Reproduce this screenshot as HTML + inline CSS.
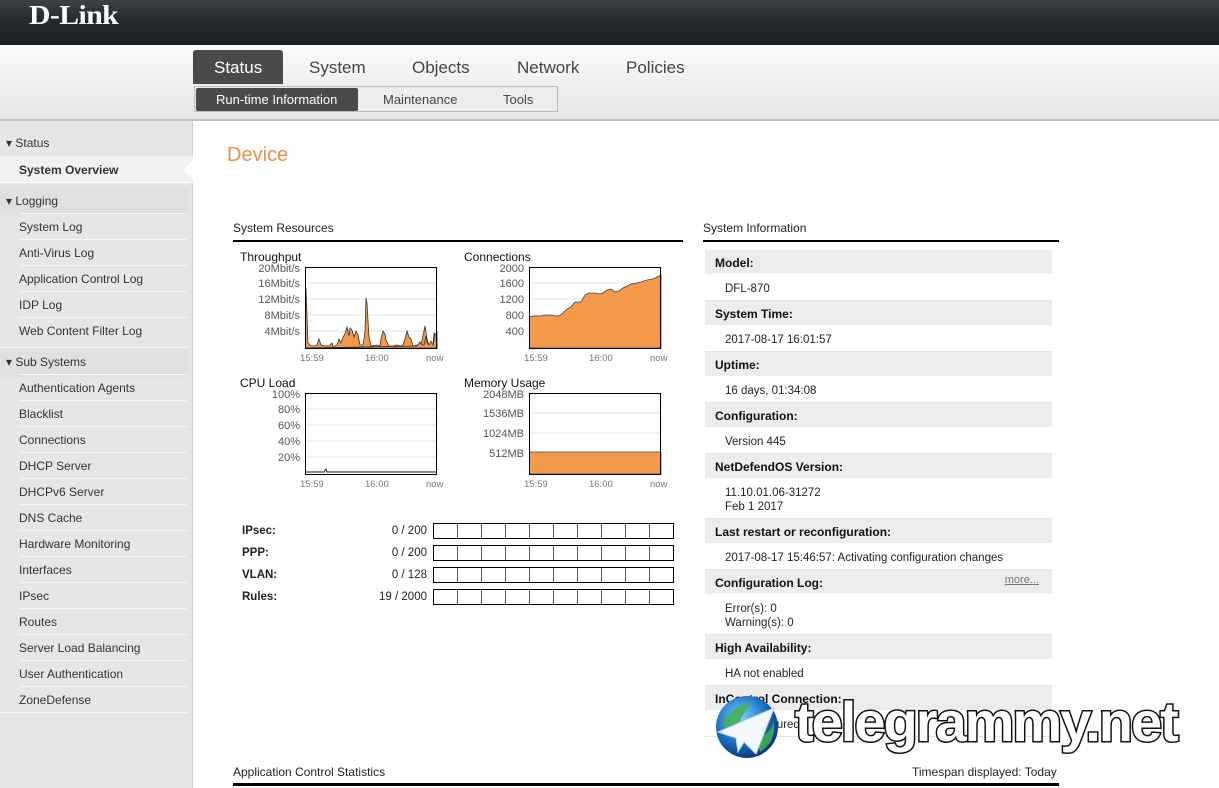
<!DOCTYPE html>
<html><head><meta charset="utf-8"><style>
*{margin:0;padding:0;box-sizing:border-box}
body{width:1219px;height:788px;overflow:hidden;background:#fff;font-family:"Liberation Sans",Arial,sans-serif;position:relative;color:#222}
.a{position:absolute}
#hdr{left:0;top:0;width:1219px;height:45px;background:linear-gradient(#3d4045,#24272b 50%,#1e2125)}
#nav{left:0;top:45px;width:1219px;height:76px;background:linear-gradient(#fafafa,#e6e6e6);border-bottom:2px solid #c4c4c4}
.tab{font-size:17px;color:#444;top:58px}
#side{left:0;top:121px;width:193px;height:667px;background:#e6e6e6;border-right:1px solid #cfcfcf}
.si{position:absolute;left:19px;font-size:12px;color:#333;line-height:28px;width:168px}
.sl{position:absolute;left:19px;width:168px;height:1px;background:#f6f6f6}
.sh{position:absolute;left:0;width:188px;font-size:12px;color:#333;line-height:28px;padding-left:6px}
.lbl{font-size:11px;color:#555;position:absolute;text-align:right;width:60px}
.ttl{font-size:12px;color:#111;position:absolute}
.ax{font-size:9.5px;color:#777;position:absolute}
.rh{position:absolute;left:705px;width:347px;height:25px;background:#ececec;border-bottom:1px solid #fff;font-size:12px;font-weight:bold;padding-left:10px;line-height:26px;color:#111}
.rv{position:absolute;left:705px;width:347px;border-bottom:1px solid #e4e4e4;font-size:11.5px;padding-left:20px;line-height:14px;color:#222}
.bar{position:absolute;left:433px;width:241px;height:16px;border:1px solid #000;background:repeating-linear-gradient(90deg,#fff 0 23px,#555 23px 24px)}
.rl{position:absolute;left:242px;font-size:11.5px;font-weight:bold}
.rn{position:absolute;left:340px;width:87px;text-align:right;font-size:11.5px}
</style></head><body>
<div id="hdr" class="a"></div>
<div class="a" style="left:29px;top:0px;font:900 27px 'Liberation Serif',serif;color:#fff;letter-spacing:-0.5px;transform:scaleX(1.1);transform-origin:left">D-Link</div>
<div id="nav" class="a"></div>
<div class="a" style="left:193px;top:50px;width:90px;height:34px;background:#4a4a4a;border-radius:3px 3px 0 0"></div>
<div class="a tab" style="left:214px;color:#fff">Status</div>
<div class="a tab" style="left:309px">System</div>
<div class="a tab" style="left:412px">Objects</div>
<div class="a tab" style="left:517px">Network</div>
<div class="a tab" style="left:626px">Policies</div>
<div class="a" style="left:194px;top:86px;width:364px;height:26px;border:1px solid #bbb;background:#ededed"></div>
<div class="a" style="left:196px;top:88px;width:162px;height:23px;background:#4a4a4a;border-radius:2px"></div>
<div class="a" style="left:216px;top:92px;font-size:13px;color:#fff">Run-time Information</div>
<div class="a" style="left:383px;top:92px;font-size:13px;color:#444">Maintenance</div>
<div class="a" style="left:503px;top:92px;font-size:13px;color:#444">Tools</div>

<div id="side" class="a"></div>
<div class="sh" style="top:129px">▾ Status</div>
<div class="a" style="left:0;top:156px;width:193px;height:27px;background:#f1f1f1;border-bottom:1px solid #fff"></div>
<div class="si" style="top:156px;font-weight:bold">System Overview</div>
<div class="a" style="left:183px;top:160px;width:0;height:0;border-top:10px solid transparent;border-bottom:10px solid transparent;border-right:11px solid #fff"></div>
<div class="sh" style="top:187px;background:#e0e0e0">▾ Logging</div>
<div class="sl" style="top:213px"></div>
<div class="si" style="top:213px">System Log</div><div class="sl" style="top:239px"></div>
<div class="si" style="top:239px">Anti-Virus Log</div><div class="sl" style="top:265px"></div>
<div class="si" style="top:265px">Application Control Log</div><div class="sl" style="top:291px"></div>
<div class="si" style="top:291px">IDP Log</div><div class="sl" style="top:317px"></div>
<div class="si" style="top:317px">Web Content Filter Log</div>
<div class="sh" style="top:347px;background:#e0e0e0;border-top:1px solid #f6f6f6;line-height:29px">▾ Sub Systems</div>
<div class="sl" style="top:374px"></div>
<div class="si" style="top:374px">Authentication Agents</div><div class="sl" style="top:400px"></div>
<div class="si" style="top:400px">Blacklist</div><div class="sl" style="top:426px"></div>
<div class="si" style="top:426px">Connections</div><div class="sl" style="top:452px"></div>
<div class="si" style="top:452px">DHCP Server</div><div class="sl" style="top:478px"></div>
<div class="si" style="top:478px">DHCPv6 Server</div><div class="sl" style="top:504px"></div>
<div class="si" style="top:504px">DNS Cache</div><div class="sl" style="top:530px"></div>
<div class="si" style="top:530px">Hardware Monitoring</div><div class="sl" style="top:556px"></div>
<div class="si" style="top:556px">Interfaces</div><div class="sl" style="top:582px"></div>
<div class="si" style="top:582px">IPsec</div><div class="sl" style="top:608px"></div>
<div class="si" style="top:608px">Routes</div><div class="sl" style="top:634px"></div>
<div class="si" style="top:634px">Server Load Balancing</div><div class="sl" style="top:660px"></div>
<div class="si" style="top:660px">User Authentication</div><div class="sl" style="top:686px"></div>
<div class="si" style="top:686px">ZoneDefense</div>
<div class="a" style="left:0;top:712px;width:188px;height:1px;background:#f6f6f6"></div>

<div class="a" style="left:227px;top:144px;font-size:20px;color:#e8904a">Device</div>

<div class="a" style="left:233px;top:221px;font-size:12px">System Resources</div>
<div class="a" style="left:233px;top:240px;width:450px;height:2px;background:#000"></div>
<div class="a" style="left:703px;top:221px;font-size:12px">System Information</div>
<div class="a" style="left:703px;top:240px;width:356px;height:2px;background:#000"></div>

<div class="ttl" style="left:240px;top:250px">Throughput</div>
<div class="ttl" style="left:464px;top:250px">Connections</div>
<div class="ttl" style="left:240px;top:376px">CPU Load</div>
<div class="ttl" style="left:464px;top:376px">Memory Usage</div>

<div class="lbl" style="left:240px;top:263px">20Mbit/s</div>
<div class="lbl" style="left:240px;top:278px">16Mbit/s</div>
<div class="lbl" style="left:240px;top:294px">12Mbit/s</div>
<div class="lbl" style="left:240px;top:310px">8Mbit/s</div>
<div class="lbl" style="left:240px;top:326px">4Mbit/s</div>
<div class="lbl" style="left:464px;top:263px">2000</div>
<div class="lbl" style="left:464px;top:278px">1600</div>
<div class="lbl" style="left:464px;top:294px">1200</div>
<div class="lbl" style="left:464px;top:310px">800</div>
<div class="lbl" style="left:464px;top:326px">400</div>
<div class="lbl" style="left:240px;top:389px">100%</div>
<div class="lbl" style="left:240px;top:404px">80%</div>
<div class="lbl" style="left:240px;top:420px">60%</div>
<div class="lbl" style="left:240px;top:436px">40%</div>
<div class="lbl" style="left:240px;top:452px">20%</div>
<div class="lbl" style="left:464px;top:389px">2048MB</div>
<div class="lbl" style="left:464px;top:408px">1536MB</div>
<div class="lbl" style="left:464px;top:428px">1024MB</div>
<div class="lbl" style="left:464px;top:448px">512MB</div>

<div class="ax" style="left:300px;top:353px">15:59</div><div class="ax" style="left:365px;top:353px">16:00</div><div class="ax" style="left:426px;top:353px">now</div>
<div class="ax" style="left:524px;top:353px">15:59</div><div class="ax" style="left:589px;top:353px">16:00</div><div class="ax" style="left:650px;top:353px">now</div>
<div class="ax" style="left:300px;top:479px">15:59</div><div class="ax" style="left:365px;top:479px">16:00</div><div class="ax" style="left:426px;top:479px">now</div>
<div class="ax" style="left:524px;top:479px">15:59</div><div class="ax" style="left:589px;top:479px">16:00</div><div class="ax" style="left:650px;top:479px">now</div>

<svg class="a" style="left:305px;top:267px" width="133" height="82">
<g stroke="#e4e4e4"><line x1="0" y1="16" x2="132" y2="16"/><line x1="0" y1="32" x2="132" y2="32"/><line x1="0" y1="48" x2="132" y2="48"/><line x1="0" y1="64" x2="132" y2="64"/></g>
<polygon fill="#f4994a" stroke="#333" stroke-width="0.8" points="0,81 0,20 1,22 3,76 6,79 10,79 12,78 14,72 16,78 20,79 24,79 27,76 28,80 32,78 34,72 36,76 38,70 40,67 42,60 43,64 44,69 45,61 47,63 49,70 51,64 53,68 55,78 58,78 60,65 61,31 62,37 64,70 66,79 72,78 75,79 76,72 78,64 80,67 81,73 84,79 88,79 92,78 96,79 98,78 100,72 102,64 103,67 104,70 106,72 108,79 112,78 116,78 118,69 120,59 121,65 122,72 124,79 128,79 129,66 131,69 132,80 132,81"/>
<polygon fill="#f4994a" stroke="#333" stroke-width="0.8" points="0,81 132,81 132,64 130,69 128,78 126,74 124,78 122,76 121,69 119,78 117,78 115,75 113,78 112,79"/>
<rect x="0.5" y="0.5" width="131" height="81" fill="none" stroke="#000"/></svg>

<svg class="a" style="left:529px;top:267px" width="133" height="82">
<g stroke="#e4e4e4"><line x1="0" y1="16" x2="132" y2="16"/><line x1="0" y1="32" x2="132" y2="32"/><line x1="0" y1="48" x2="132" y2="48"/><line x1="0" y1="64" x2="132" y2="64"/></g>
<polygon fill="#f4994a" stroke="#444" stroke-width="0.8" points="0,81 0,50 4,49 12,49 16,48 22,48 27,49 30,49 34,46 38,42 42,40 46,35 52,35 56,28 60,26 66,26 70,27 74,26 78,23 82,22 86,25 90,24 94,21 98,19 102,17 108,16 112,15 118,13 124,12 128,10 132,8 132,81"/>
<rect x="0.5" y="0.5" width="131" height="81" fill="none" stroke="#000"/></svg>

<svg class="a" style="left:305px;top:393px" width="133" height="82">
<g stroke="#e4e4e4"><line x1="0" y1="16" x2="132" y2="16"/><line x1="0" y1="32" x2="132" y2="32"/><line x1="0" y1="48" x2="132" y2="48"/><line x1="0" y1="64" x2="132" y2="64"/></g>
<polyline fill="none" stroke="#444" stroke-width="1.2" points="0,79 19,79 21,76 22,79 132,79"/>
<rect x="0.5" y="0.5" width="131" height="81" fill="none" stroke="#000"/></svg>

<svg class="a" style="left:529px;top:393px" width="133" height="82">
<g stroke="#e4e4e4"><line x1="0" y1="20" x2="132" y2="20"/><line x1="0" y1="40" x2="132" y2="40"/></g>
<rect x="0" y="59" width="132" height="22" fill="#f4994a" stroke="#555" stroke-width="0.8"/>
<rect x="0.5" y="0.5" width="131" height="81" fill="none" stroke="#000"/></svg>

<div class="rl" style="top:525px">IPsec:</div><div class="rn" style="top:525px">0 / 200</div><div class="bar" style="top:523px"></div>
<div class="rl" style="top:547px">PPP:</div><div class="rn" style="top:547px">0 / 200</div><div class="bar" style="top:545px"></div>
<div class="rl" style="top:569px">VLAN:</div><div class="rn" style="top:569px">0 / 128</div><div class="bar" style="top:567px"></div>
<div class="rl" style="top:591px">Rules:</div><div class="rn" style="top:591px">19 / 2000</div><div class="bar" style="top:589px"></div>

<div class="rh" style="top:250px">Model:</div>
<div class="rv" style="top:276px;height:25px;padding-top:6px">DFL-870</div>
<div class="rh" style="top:301px">System Time:</div>
<div class="rv" style="top:327px;height:25px;padding-top:6px">2017-08-17 16:01:57</div>
<div class="rh" style="top:352px">Uptime:</div>
<div class="rv" style="top:378px;height:25px;padding-top:6px">16 days, 01:34:08</div>
<div class="rh" style="top:403px">Configuration:</div>
<div class="rv" style="top:429px;height:25px;padding-top:6px">Version 445</div>
<div class="rh" style="top:454px">NetDefendOS Version:</div>
<div class="rv" style="top:480px;height:39px;padding-top:6px">11.10.01.06-31272<br>Feb 1 2017</div>
<div class="rh" style="top:519px">Last restart or reconfiguration:</div>
<div class="rv" style="top:545px;height:25px;padding-top:6px">2017-08-17 15:46:57: Activating configuration changes</div>
<div class="rh" style="top:570px">Configuration Log:<span style="position:absolute;right:13px;top:-3px;font-weight:normal;font-size:11px;color:#777;text-decoration:underline">more...</span></div>
<div class="rv" style="top:596px;height:39px;padding-top:6px">Error(s): 0<br>Warning(s): 0</div>
<div class="rh" style="top:635px">High Availability:</div>
<div class="rv" style="top:661px;height:25px;padding-top:6px">HA not enabled</div>
<div class="rh" style="top:686px">InControl Connection:</div>
<div class="rv" style="top:712px;height:25px;padding-top:6px">Not configured</div>

<div class="a" style="left:233px;top:765px;font-size:12px">Application Control Statistics</div>
<div class="a" style="left:912px;top:765px;font-size:12px">Timespan displayed: Today</div>
<div class="a" style="left:233px;top:783px;width:826px;height:3px;background:#000"></div>

<svg class="a" style="left:712px;top:694px" width="70" height="66">
<defs><radialGradient id="g" cx="40%" cy="35%" r="65%"><stop offset="0" stop-color="#7fd0ff"/><stop offset="0.6" stop-color="#1b76c9"/><stop offset="1" stop-color="#0a3a80"/></radialGradient></defs>
<circle cx="35" cy="33" r="31" fill="url(#g)"/>
<path d="M10 30 Q20 12 40 8 Q30 20 22 40 Z" fill="#3fb34a" opacity="0.85"/>
<path d="M45 45 Q58 40 62 28 Q64 48 48 58 Z" fill="#3fb34a" opacity="0.85"/>
<path d="M6 38 L62 14 L44 60 L32 48 L26 58 L24 44 Z" fill="#f4f7fb" stroke="#c9d3de" stroke-width="1"/>
</svg>
<div class="a" style="left:795px;top:687px;font-weight:bold;font-size:56px;line-height:70px;color:#fff;-webkit-text-stroke:3px #111;paint-order:stroke fill;letter-spacing:-2px">telegrammy.net</div>
</body></html>
